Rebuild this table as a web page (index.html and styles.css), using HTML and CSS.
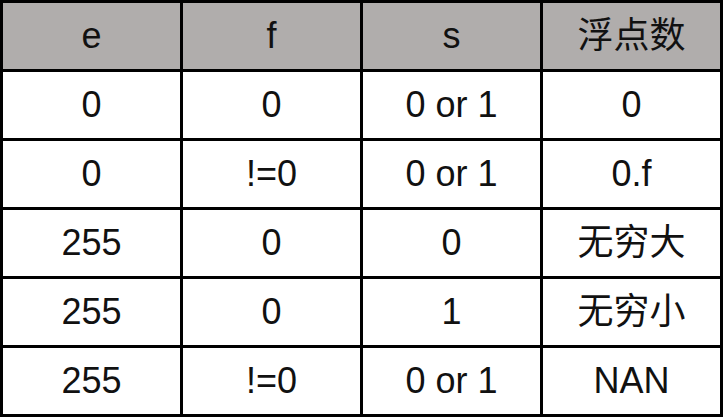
FILE: index.html
```html
<!DOCTYPE html>
<html lang="zh">
<head>
<meta charset="utf-8">
<link rel="stylesheet" href="styles.css">
</head>
<body>
<table class="grid">
  <thead>
    <tr><th>e</th><th>f</th><th>s</th><th>浮点数</th></tr>
  </thead>
  <tbody>
    <tr><td>0</td><td>0</td><td>0 or 1</td><td>0</td></tr>
    <tr><td>0</td><td>!=0</td><td>0 or 1</td><td>0.f</td></tr>
    <tr><td>255</td><td>0</td><td>0</td><td>无穷大</td></tr>
    <tr><td>255</td><td>0</td><td>1</td><td>无穷小</td></tr>
    <tr><td>255</td><td>!=0</td><td>0 or 1</td><td>NAN</td></tr>
  </tbody>
</table>
</body>
</html>
```
FILE: styles.css
```css
html, body {
  margin: 0;
  padding: 0;
  background: #fff;
}
.grid {
  border-collapse: separate;
  border-spacing: 3px;
  background: #000;
  width: 723px;
  height: 417px;
  table-layout: fixed;
  font-family: "Liberation Sans", "Noto Sans CJK SC", sans-serif;
  font-size: 36px;
  color: #111;
}
.grid th,
.grid td {
  width: 177px;
  height: 66px;
  padding: 0;
  text-align: center;
  vertical-align: middle;
  font-weight: normal;
  background: #fff;
  line-height: 1;
}
.grid th {
  background: #b0adac;
}
```
